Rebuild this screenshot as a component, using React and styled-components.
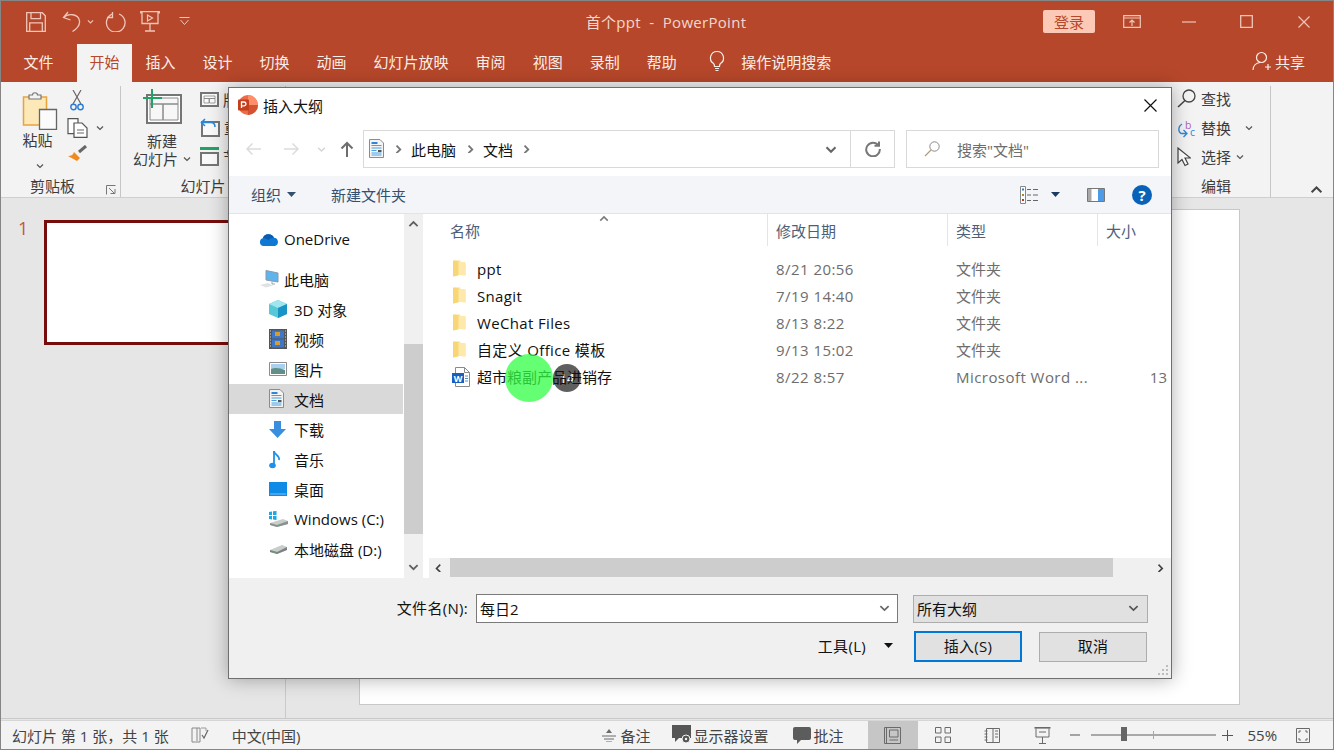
import React from "react";
import styled, { createGlobalStyle } from "styled-components";

const FONT = `"Open Sans", "Noto Sans CJK SC", sans-serif`;
const RED = "#b7472a";
const QA = "#efc6b9";

const Global = createGlobalStyle`
  html, body { margin: 0; padding: 0; background: #fff; overflow: hidden; }
  * { box-sizing: border-box; }
  body { font-family: ${FONT}; font-size: 15px; }
  svg { display: block; flex-shrink: 0; }
`;

const Win = styled.div`
  position: relative; width: 1334px; height: 750px; display: flex; flex-direction: column;
  border: 1px solid #858585; background: #e6e6e6; overflow: hidden;
`;

/* ---------- Title bar ---------- */
const TitleBar = styled.div`
  height: 41px; flex: none; background: ${RED}; color: #f3d8cf;
  display: grid; grid-template-columns: 1fr auto 1fr; align-items: center;
`;
const Quick = styled.div`display: flex; align-items: center; padding-left: 25px;`;
const QuickBtn = styled.span`display: flex; margin-left: ${p => p.$ml || 0}px;`;
const DocTitle = styled.div`font-size: 15px; white-space: pre; color: #f3d8cf; letter-spacing: .3px; margin-right: 2px;`;
const WinCtrls = styled.div`display: flex; align-items: center; justify-content: flex-end; padding-right: 23px;`;
const Login = styled.div`
  width: 52px; height: 23px; background: #fbc9b5; color: ${RED}; border-radius: 2px;
  display: flex; align-items: center; justify-content: center; margin-right: 28px;
`;
const CtrlBtn = styled.span`display: flex; margin-left: ${p => p.$ml || 0}px;`;

/* ---------- Tabs ---------- */
const Tabs = styled.div`
  height: 40px; flex: none; background: ${RED}; display: flex; align-items: flex-end; padding-left: 9px;
`;
const Tab = styled.div`
  height: 38px; display: flex; align-items: center; white-space: nowrap; padding-bottom: 4px;
  padding-left: ${p => (p.$active ? 12.5 : 13.5)}px; padding-right: ${p => (p.$active ? 12.5 : 13.5)}px;
  margin-left: ${p => (p.$active ? 10 : 0)}px;
  background: ${p => (p.$active ? "#f3f3f3" : "transparent")};
  color: ${p => (p.$active ? RED : "#fbeee9")};
`;
const TellMe = styled.div`display: flex; align-items: center; height: 38px; padding-bottom: 4px; margin-left: 18px; color: #fbeee9; gap: 15px;`;
const Share = styled.div`display: flex; align-items: center; height: 38px; padding-bottom: 4px; margin-left: auto; padding-right: 28px; color: #fbeee9; gap: 3px;`;

/* ---------- Ribbon ---------- */
const Ribbon = styled.div`
  height: 116px; flex: none; background: #f3f3f3; border-bottom: 1px solid #cfcfcf;
  display: flex; color: #3c3c3c; position: relative;
`;
const Group = styled.div`
  width: ${p => p.$w}px; height: 111px; margin-top: 4px; display: flex; flex-direction: column; position: relative;
  border-right: 1px solid #c6c6c6; margin-left: ${p => p.$ml || 0}px;
`;
const GroupBody = styled.div`flex: 1; min-height: 0; display: flex; padding-left: ${p => p.$pl || 0}px;`;
const GroupLabel = styled.div`
  height: 24px; flex: none; display: flex; align-items: center; justify-content: ${p => (p.$left ? "flex-start" : "center")};
  padding-left: ${p => p.$pl || 0}px; padding-right: ${p => p.$pr || 0}px; position: relative; white-space: nowrap;
`;
const Launcher = styled.span`position: absolute; right: 4px; bottom: 2px;`;
const BigCol = styled.div`display: flex; flex-direction: column; align-items: center; line-height: 18px; padding-top: ${p => p.$pt || 0}px;`;
const BigLabel = styled.div`display: flex; align-items: center; gap: ${p => p.$gap || 3}px; white-space: nowrap; margin-top: ${p => p.$mt || 0}px; margin-right: ${p => p.$mr || 0}px;`;
const SmallCol = styled.div`display: flex; flex-direction: column; margin-left: ${p => p.$ml}px; padding-top: ${p => p.$pt}px; gap: ${p => p.$gap}px;`;
const SmallRow = styled.div`display: flex; align-items: center; height: ${p => p.$h}px; gap: ${p => p.$gap ?? 6}px; white-space: nowrap; padding-left: ${p => p.$pl || 0}px;`;
const Collapse = styled.span`position: absolute; right: 10px; bottom: 2px;`;
const IconBox = styled.span`width: 24px; display: flex; flex: none;`;

/* ---------- Workspace ---------- */
const Work = styled.div`flex: 1; display: flex; min-height: 0; border-bottom: 1px solid #c9c9c9; background: #e6e6e6;`;
const Thumbs = styled.div`width: 285px; flex: none; border-right: 1px solid #c9c9c9; display: flex; padding: 22px 0 0 17px; overflow: hidden;`;
const ThumbNum = styled.div`width: 26px; flex: none; color: #c9553a; font-size: 18px; line-height: 16px;`;
const Thumb = styled.div`width: 267px; height: 125px; background: #fff; border: 3px solid #760c0c; flex: none;`;
const Canvas = styled.div`flex: 1; padding: 11px 0 0 73px;`;
const Slide = styled.div`width: 881px; height: 496px; background: #fff; border: 1px solid #c8c8c8;`;

/* ---------- Status bar ---------- */
const Status = styled.div`
  height: 29px; flex: none; margin-top: 1px; background: #f3f3f3; display: flex; align-items: center; color: #444;
  border-top: 1px solid #d6d6d6; font-size: 15px; white-space: nowrap;
`;
const StatusText = styled.span`margin-left: ${p => p.$ml || 0}px;`;
const StatusIcon = styled.span`display: flex; margin-left: ${p => p.$ml || 0}px;`;
const Views = styled.div`display: flex; margin-left: 24px; align-self: stretch;`;
const ViewBtn = styled.div`width: 50px; display: flex; align-items: center; justify-content: center; background: ${p => (p.$on ? "#c6c6c6" : "transparent")};`;
const Zoom = styled.div`width: 125px; height: 2px; background: #a8a8a8; position: relative; margin-left: 11px;`;
const ZoomThumb = styled.span`position: absolute; left: 30px; top: -7px; width: 6px; height: 14px; background: #666;`;
const ZoomTick = styled.span`position: absolute; left: 62px; top: -3px; width: 1px; height: 8px; background: #a8a8a8;`;

/* ---------- Dialog ---------- */
const Dialog = styled.div`
  position: absolute; left: 227px; top: 86px; width: 944px; height: 592px; background: #fff;
  border: 1px solid #6f6f6f; box-shadow: 0 0 18px rgba(0,0,0,.32); display: flex; flex-direction: column; color: #111;
`;
const DlgTitle = styled.div`height: 42px; flex: none; display: flex; align-items: center; padding: 0 14px 8px 9px; gap: 5px;`;
const DlgClose = styled.span`margin-left: auto; display: flex;`;
const AddrRow = styled.div`height: 38px; flex: none; display: flex; align-items: stretch; padding-left: 16px;`;
const NavBtn = styled.span`display: flex; align-items: center; justify-content: center; width: ${p => p.$w}px; margin-left: ${p => p.$ml || 0}px;`;
const AddrBox = styled.div`
  width: 488px; margin-left: 9px; border: 1px solid #d9d9d9; display: flex; align-items: center; padding-left: 5px;
`;
const Crumb = styled.span`margin-left: ${p => p.$ml || 0}px; display: flex;`;
const AddrDrop = styled.span`margin-left: auto; margin-right: 13px; display: flex;`;
const RefreshBox = styled.div`width: 44px; border: 1px solid #d9d9d9; border-left: 0; display: flex; align-items: center; justify-content: center;`;
const SearchBox = styled.div`
  width: 253px; margin-left: 11px; border: 1px solid #d9d9d9; display: flex; align-items: center; padding-left: 17px; gap: 17px; color: #6d6d6d;
`;
const Toolbar = styled.div`
  height: 38px; flex: none; margin-top: 8px; background: #f3f5f8; border-bottom: 1px solid #e4e4e4;
  display: flex; align-items: center; padding-left: 22px; color: #33506f;
`;
const ToolBtn = styled.div`display: flex; align-items: center; gap: 6px; margin-left: ${p => p.$ml || 0}px; white-space: nowrap;`;
const ToolIcons = styled.div`margin-left: auto; padding-right: 19px; display: flex; align-items: center;`;
const ToolIcon = styled.span`display: flex; margin-left: ${p => p.$ml || 0}px;`;
const Content = styled.div`flex: 1; display: flex; min-height: 0; position: relative;`;
const Nav = styled.div`width: 175px; flex: none; padding-top: 10px;`;
const NavRow = styled.div`
  height: 30px; display: flex; align-items: center; padding-left: ${p => p.$indent}px;
  margin-bottom: ${p => p.$gap || 0}px; background: ${p => (p.$on ? "#d9d9d9" : "transparent")}; margin-right: 1px; white-space: nowrap;
`;
const NavIcon = styled.span`width: 25px; flex: none; display: flex;`;
const VScroll = styled.div`width: 19px; flex: none; background: #f0f0f0; display: flex; flex-direction: column; align-items: center; justify-content: space-between; padding: 6px 0 7px; position: relative;`;
const VThumb = styled.span`position: absolute; left: 0; right: 0; top: 130px; height: 190px; background: #cdcdcd;`;
const ListPane = styled.div`flex: 1; min-width: 0; display: flex; flex-direction: column; margin-left: 1px; position: relative;`;
const HeaderRow = styled.div`
  display: grid; grid-template-columns: 344px 180px 150px 1fr; height: 33px; flex: none; color: #4c607a; position: relative;
`;
const HeadCell = styled.div`
  padding-left: ${p => p.$pl || 8}px; height: 32px; display: flex; align-items: center; white-space: nowrap; overflow: hidden;
  border-right: ${p => (p.$noline ? 0 : 1)}px solid #e5e5e5;
`;
const SortMark = styled.span`position: absolute; left: 175px; top: 1px;`;
const Rows = styled.div`flex: 1; padding-top: 8px;`;
const FileRow = styled.div`display: grid; grid-template-columns: 344px 180px 150px 1fr; height: 27px; align-items: center; white-space: nowrap;`;
const NameCell = styled.div`display: flex; align-items: center; padding-left: 28px; position: relative; z-index: 2; letter-spacing: ${p => (p.$latin ? ".35px" : "0")};`;
const FileIcon = styled.span`width: 25px; flex: none; display: flex;`;
const MetaCell = styled.div`padding-left: 8px; color: #6d6d6d; overflow: hidden; letter-spacing: ${p => (p.$latin ? ".45px" : "0")};`;
const SizeCell = styled.div`text-align: right; padding-right: 4px; color: #6d6d6d;`;
const HScroll = styled.div`height: 20px; flex: none; margin-left: 5px; background: #f0f0f0; display: flex; align-items: center; justify-content: space-between; padding: 0 5px; position: relative;`;
const HThumb = styled.span`position: absolute; left: 21px; width: 663px; top: 0; bottom: 1px; background: #cdcdcd;`;
const Footer = styled.div`height: 100px; flex: none; background: #f0f0f0; padding: 16px 23px 0 0; position: relative;`;
const FootRow = styled.div`display: flex; align-items: center; justify-content: flex-end; margin-bottom: 8px; margin-right: ${p => p.$mr || 0}px;`;
const FieldLabel = styled.span`margin-right: 8px; padding-bottom: 2px; white-space: nowrap; letter-spacing: .3px;`;
const NameInput = styled.div`width: 422px; height: 29px; background: #fff; border: 1px solid #7a7a7a; display: flex; align-items: center; padding: 0 7px 1px 3px; justify-content: space-between;`;
const TypeSelect = styled.div`width: 235px; height: 28px; margin-left: 15px; background: #e1e1e1; border: 1px solid #adadad; display: flex; align-items: center; padding: 0 8px 1px 3px; justify-content: space-between;`;
const Tools = styled.div`display: flex; align-items: center; margin-right: 21px; padding-bottom: 2px; gap: 18px; white-space: nowrap; letter-spacing: .3px;`;
const Btn = styled.div`
  width: 108px; height: ${p => (p.$primary ? 31 : 30)}px; background: #e1e1e1; margin-left: ${p => p.$ml || 0}px;
  border: ${p => (p.$primary ? "2px solid #0078d7" : "1px solid #adadad")}; padding-bottom: 2px; letter-spacing: .3px;
  display: flex; align-items: center; justify-content: center;
`;
const Grip = styled.span`position: absolute; right: 2px; bottom: 2px;`;
const ClickMark = styled.div`
  position: absolute; left: ${p => p.$x}px; top: ${p => p.$y}px; width: ${p => p.$d}px; height: ${p => p.$d}px; border-radius: 50%;
  background: ${p => p.$c}; z-index: ${p => p.$z}; color: #fff; font-size: 13px; display: flex; align-items: center; justify-content: center;
`;

/* ---------- Icons ---------- */
const S = ({ w, h, children, vb }) => <svg width={w} height={h} viewBox={vb || `0 0 ${w} ${h}`} fill="none">{children}</svg>;
const Chev = ({ c = "#555", w = 8, dir = "down", sw = 1.2 }) => {
  const d = { down: "M1 1.5 L4 4.5 L7 1.5", up: "M1 4.5 L4 1.5 L7 4.5", left: "M5 .5 L2 3.5 L5 6.5", right: "M2 .5 L5 3.5 L2 6.5" }[dir];
  return <S w={w} h={w * 0.75} vb="0 0 8 6"><path d={d} stroke={c} strokeWidth={sw} /></S>;
};
const Caret = ({ c = "#333" }) => <S w={9} h={5}><path d="M0 0h9L4.5 5z" fill={c} /></S>;

const SaveI = () => <S w={20} h={20}><path d="M.7.7h15.6l3 3v15.6H.7z M5 .7v6h9.5v-6 M3.7 19.3v-8.5h12.6v8.5" stroke={QA} strokeWidth="1.3" /></S>;
const UndoI = () => <S w={19} h={21}><path d="M6 1 1.5 6.5 8.5 9 M1.5 6.5C6 2 16.5 2.5 17.5 10c.6 4.5-3 8-7 10.5" stroke={QA} strokeWidth="1.3" /></S>;
const RedoI = () => <S w={21} h={21}><path d="M7 3.2A9.3 9.3 0 1 0 14 3 M7.5 1v5.5H2" stroke={QA} strokeWidth="1.3" /></S>;
const PresentI = () => <S w={20} h={21}><path d="M.7 2.5V.7h18.6v1.8 M2 1v11.5h16V1 M10 12.5V20 M5 20h10" stroke={QA} strokeWidth="1.3" /><path d="M7.500 4v6l5-3z" stroke={QA} strokeWidth="1.2" /></S>;
const QaDrop = () => <S w={11} h={9}><path d="M.5.5h10 M1.500 3l4 4.500 4-4.500" stroke={QA} strokeWidth="1" /></S>;
const RibDisplay = () => <S w={18} h={13}><path d="M.7.7h16.6v11.6H.7z M.7 3h16.6" stroke={QA} strokeWidth="1.2" /><path d="M9 11V5 M6.500 7.500 9 5l2.500 2.500" stroke={QA} strokeWidth="1.2" /></S>;
const MinI = () => <S w={14} h={2}><path d="M0 1h14" stroke={QA} strokeWidth="1.2" /></S>;
const MaxI = () => <S w={13} h={13}><path d="M.7.7h11.6v11.6H.7z" stroke={QA} strokeWidth="1.3" /></S>;
const CloseI = ({ c = QA, s = 12 }) => <S w={s} h={s}><path d={`M.5.5 ${s - .5} ${s - .5}M${s - .5} .5 .5 ${s - .5}`} stroke={c} strokeWidth="1.2" /></S>;
const BulbI = () => <S w={18} h={22}><path d="M9 1.500a6.500 6.500 0 0 0-3.500 12c.8.6 1 1.500 1 3h5c0-1.500.2-2.400 1-3A6.500 6.500 0 0 0 9 1.500z M7 18.500h4 M7.500 20.500h3" stroke="#fbeee9" strokeWidth="1.2" /></S>;
const UserI = () => <S w={20} h={20}><circle cx="9.500" cy="6.500" r="5" stroke="#fbeee9" strokeWidth="1.2" /><path d="M1 19c0-4 3-7 7-7.500 M13 16h6 M16 13v6" stroke="#fbeee9" strokeWidth="1.2" /></S>;

const PasteI = () => <S w={36} h={38}><path d="M1.500 5h23v28h-23z" fill="#fde8b8" stroke="#e8a33d" strokeWidth="1.5" /><path d="M7 3h3.500c0-3 5-3 5 0H19v4H7z" fill="#f3f3f3" stroke="#777" strokeWidth="1.2" /><path d="M17.500 17.500h17v20h-17z" fill="#fbfbfb" stroke="#666" strokeWidth="1.3" /></S>;
const CutI = () => <S w={14} h={21}><path d="M3 0l8 14M11 0 3 14" stroke="#666" strokeWidth="1.2" /><circle cx="3.500" cy="17" r="2.700" stroke="#2b7cd3" strokeWidth="1.4" /><circle cx="10.500" cy="17" r="2.700" stroke="#2b7cd3" strokeWidth="1.4" /></S>;
const CopyI = () => <S w={21} h={20}><path d="M1 .7h10v15H1z" fill="#fff" stroke="#555" strokeWidth="1.2" /><path d="M7 5h8l5 5v9.300H7z" fill="#fff" stroke="#555" strokeWidth="1.2" /><path d="M10 12h7M10 15h7" stroke="#666" /></S>;
const BrushI = () => <S w={20} h={19}><path d="M12 7l7-6" stroke="#666" strokeWidth="3" /><path d="M7 7l6 6-3 3-9-5c3 0 5-1 6-4z" fill="#f08a1d" /></S>;
const LauncherI = () => <S w={10} h={10}><path d="M.5 9.500V.5h9 M3 3l5 5 M4.500 8.500H9V4" stroke="#777" /></S>;
const NewSlideI = () => <S w={39} h={35}><path d="M4 6h34v28H4z" fill="#fff" stroke="#757575" strokeWidth="2" /><path d="M7 9h28v6H7z M7 15h13v16H7z M20 15h15v16H20z" fill="#f7f7f7" stroke="#8a8a8a" /><path d="M9 0v19 M0 9h19" stroke="#21a366" strokeWidth="2" /></S>;
const LayoutI = () => <S w={19} h={15}><path d="M1 1h17v13H1z" fill="#fafafa" stroke="#757575" strokeWidth="2" /><path d="M4 4h11v2.500H4z M4 6.500h5V11H4z M9.500 6.500H15V11H9.500z" stroke="#888" strokeWidth=".8" /></S>;
const ResetI = () => <S w={20} h={20}><path d="M2 5h17v14H2z" fill="#fafafa" stroke="#757575" strokeWidth="2" /><path d="M5 2 1.500 5.500 5 9 M2 5.500h9c3 0 4 2 4 4.500" stroke="#2b88d8" strokeWidth="1.6" /></S>;
const SectionI = () => <S w={19} h={19}><path d="M0 1.500h19" stroke="#21a366" strokeWidth="3" /><path d="M1 6h17v12H1z" fill="#fafafa" stroke="#757575" strokeWidth="2" /></S>;
const FindI = () => <S w={19} h={19}><circle cx="12" cy="7" r="6" stroke="#444" strokeWidth="1.3" /><path d="M8 11.500 1 18" stroke="#444" strokeWidth="1.6" /></S>;
const ReplaceI = () => <S w={22} h={22}><path d="M5 7C1.500 9 .5 14 4 16.500h5 M6.500 13 10 16.500 6.500 20" stroke="#2b88d8" strokeWidth="1.3" /><text x="8" y="11.500" fontSize="10.500" fontFamily="Open Sans" fill="#b061c0">b</text><text x="13" y="19" fontSize="10.500" fontFamily="Open Sans" fill="#2b88d8">c</text></S>;
const SelectI = () => <S w={14} h={20}><path d="M1 1v15l4-3.500 3 6 3-1.500-3-6h5.500z" fill="#fff" stroke="#444" strokeWidth="1.2" /></S>;

const PptLogo = () => <S w={20} h={20}><circle cx="10" cy="10" r="10" fill="#ed6c47" /><path d="M10 0a10 10 0 0 1 10 10H10z" fill="#ff8f6b" /><path d="M10 20a10 10 0 0 0 10-10H10z" fill="#d35230" /><rect x="0" y="4.500" width="11" height="11" rx="1" fill="#c43e1c" /><path d="M3.500 13V7h2.500a1.800 1.800 0 0 1 0 3.800H3.500" stroke="#fff" strokeWidth="1.3" /></S>;
const NavArrow = ({ c, left }) => <S w={16} h={14}><path d={left ? "M16 7H2 M7.500 1.500 2 7l5.500 5.500" : "M0 7h14 M8.500 1.500 14 7l-5.500 5.500"} stroke={c} strokeWidth="1.5" /></S>;
const UpArrow = () => <S w={14} h={16}><path d="M7 16V2 M1.500 7.500 7 2l5.500 5.500" stroke="#6e6e6e" strokeWidth="2" /></S>;
const DocsI = ({ s = 15 }) => <S w={s} h={s * 1.27} vb="0 0 15 19"><path d="M.5.5h10.500l3.500 3.500v14.500H.5z" fill="#f4f4f4" stroke="#8b8b8b" /><path d="M2.500 3h6v2h-6z" fill="#2f86d8" /><path d="M2.500 6.500h10M2.500 9h10 M2.500 11.500h5M2.500 14h10M2.500 16h10" stroke="#4a9fe0" /><path d="M9 11h3.500v2H9z" fill="#555" /></S>;
const Refresh = () => <S w={16} h={16}><path d="M13.500 4.500A6.800 6.800 0 1 0 14.800 8 M9.500 4.800h4.500V.5" stroke="#777" strokeWidth="2" /></S>;
const SearchI = () => <S w={16} h={16}><circle cx="10.500" cy="5.500" r="4.700" stroke="#8a8a8a" /><path d="M7 9 1 15" stroke="#b39b78" strokeWidth="1.3" /></S>;
const ListViewI = () => <S w={18} h={18}><path d="M.5.500h5v17h-5z" fill="#fff" stroke="#888" /><path d="M2 2.500h2v2H2z" fill="#3577c8" /><path d="M2 8h2v2H2z" fill="#a08a30" /><path d="M2 13h2v2H2z" fill="#b83b1d" /><path d="M7 3.500h4M13 3.500h5M7 9h4M13 9h5M7 14.500h4M13 14.500h5" stroke="#666" /></S>;
const PaneI = () => <S w={18} h={14}><path d="M.5.500h17v13H.5z" fill="#fff" stroke="#777" /><path d="M1 1h3.500v12H1z" fill="#a8a8a8" /><path d="M11 1h6v12h-6z" fill="#4d9be6" /></S>;
const HelpI = () => <S w={20} h={20}><circle cx="10" cy="10" r="10" fill="#0a62b8" /><text x="10" y="15.500" textAnchor="middle" fontSize="15" fontWeight="700" fontFamily="Open Sans" fill="#fff">?</text></S>;

const OneDriveI = () => <S w={20} h={13}><path d="M4.500 13A4 4 0 0 1 3.800 5.200 6 6 0 0 1 15 4.800 4.200 4.200 0 0 1 16 13z" fill="#0f78d4" /><path d="M3.800 5.200A6 6 0 0 1 15 4.800C12 4.500 11 6 9.500 7 7.500 5.500 5.500 5 3.800 5.200z" fill="#0b5cad" /></S>;
const PcI = () => <S w={20} h={18}><path d="M7 .5l12 2.500v9L7 10z" fill="#5fb4ee" stroke="#8a9aa8" /><path d="M13 11.500v2.500h3" stroke="#9aa5ae" /><path d="M1 15l8-2 5 2.500-7 2z" fill="#dfe3e6" /></S>;
const CubeI = () => <S w={18} h={18}><path d="M9 0l9 4v10l-9 4-9-4V4z" fill="#56c8d8" /><path d="M0 4l9 4 9-4-9-4z" fill="#9fe6ee" /><path d="M9 8l9-4v10l-9 4z" fill="#1a93c6" /></S>;
const VideoI = () => <S w={18} h={20}><path d="M0 0h18v20H0z" fill="#555" /><path d="M3 1.500h12v8H3z" fill="#3d78c8" /><path d="M3 10.500h12v8H3z" fill="#3d78c8" /><path d="M6 3h5v4H6zM6 12h5v4H6z" fill="#d99a2e" /><path d="M1 2h1M1 5h1M1 8h1M1 11h1M1 14h1M1 17h1M16 2h1M16 5h1M16 8h1M16 11h1M16 14h1M16 17h1" stroke="#ddd" /></S>;
const PicI = () => <S w={18} h={14}><path d="M.5.500h17v13H.5z" fill="#fff" stroke="#8c8c8c" /><path d="M2 2h14v5H2z" fill="#a9d0ee" /><path d="M2 7c4-2 9-1 14 1v4H2z" fill="#5f8f86" /></S>;
const DownI = () => <S w={17} h={17}><path d="M5 0h7v8h5l-8.500 9L0 8h5z" fill="#3a8ede" /></S>;
const MusicI = () => <S w={12} h={19}><path d="M5 1v14" stroke="#1e90ea" strokeWidth="1.8" /><ellipse cx="3.500" cy="15.500" rx="3.300" ry="2.800" fill="#1e90ea" /><path d="M5 1c0 4 6 4 5 9" stroke="#1e90ea" strokeWidth="1.8" /></S>;
const DesktopI = () => <S w={18} h={14}><path d="M0 0h18v14H0z" fill="#0d8be6" /><path d="M1 12h16" stroke="#7ac2f5" /></S>;
const WinDriveI = () => <S w={19} h={16}><path d="M0 1l3-.5V4H0zM4 .3 7.500 0v4H4zM0 5h3v3.500L0 8zM4 5h3.500v4L4 8.600z" fill="#19a9e8" /><path d="M1 12l13-4 5 2v3L8 16l-7-2z" fill="#c9cccd" /><path d="M1 12l7 2 11-4v3L8 16l-7-2z" fill="#8b8f90" /><path d="M9 14h1" stroke="#3ecf5c" /></S>;
const DriveI = () => <S w={19} h={10}><path d="M1 6l12-5 5 2v3L8 10 1 8z" fill="#c9cccd" /><path d="M1 6l7 2 10-5v3L8 10 1 8z" fill="#7d8182" /><path d="M5 8h2" stroke="#3ecf5c" /></S>;
const FolderI = () => <S w={14} h={17}><path d="M2 .5h6l1 3h4.500v12L7 15l-5.500 1.500z" fill="#fce08d" /><path d="M1 .5 6 1v14.500L1 16.500z" fill="#f8d676" /><path d="M7 2h6.500v13H7z" fill="#fde9ac" /></S>;
const WordI = () => <S w={18} h={20}><path d="M3.500.5h9l5 5v14h-14z" fill="#fff" stroke="#8a8a8a" /><path d="M12.500.5v5h5" stroke="#8a8a8a" /><path d="M0 6h12v10H0z" fill="#1b5ebe" /><text x="6" y="14.500" textAnchor="middle" fontSize="9" fontWeight="700" fontFamily="Open Sans" fill="#fff">W</text><path d="M13 9h3M13 11.500h3M13 14h3" stroke="#5a8fd6" /></S>;
const GripI = () => <S w={12} h={12}><path d="M9 1h2v2H9zM5 5h2v2H5zM9 5h2v2H9zM1 9h2v2H1zM5 9h2v2H5zM9 9h2v2H9z" fill="#bdbdbd" /></S>;

const G = "#6b6b6b";
const SigI = () => <S w={20} h={16}><path d="M1 1h5l3 0v14H1z M6 1v13" stroke="#888" /><path d="M11 8l2 3 4-8" stroke="#666" strokeWidth="1.2" /><path d="M10 1h5v3" stroke="#999" /></S>;
const NotesI = () => <S w={14} h={13}><path d="M4 4l3-4 3 4z" fill={G} /><path d="M0 7h14M2 10h10M4 13h6" stroke={G} /></S>;
const MonitorI = () => <S w={22} h={20}><path d="M0 0h19v13H7l-4 4v-4H0z" fill="#555" /><circle cx="14" cy="14" r="4" fill="#555" stroke="#f3f3f3" strokeWidth="1" /><circle cx="14" cy="14" r="1.2" fill="#f3f3f3" /></S>;
const CommentI = () => <S w={18} h={17}><path d="M2 0h14a2 2 0 0 1 2 2v9a2 2 0 0 1-2 2H8l-4 4v-4H2a2 2 0 0 1-2-2V2a2 2 0 0 1 2-2z" fill="#5c5c5c" /></S>;
const NormalV = () => <S w={17} h={17}><path d="M.5.500h16v16H.5z M2.500.5v16 M5.500 3h8.500v7H5.500z M5.500 13h8.500" stroke="#6a6a6a" /></S>;
const GridV = () => <S w={16} h={16}><path d="M.5.500h5.500v5.500H.5zM10 .5h5.500v5.500H10zM.5 10h5.500v5.500H.5zM10 10h5.500v5.500H10z" stroke="#6a6a6a" /></S>;
const ReadV = () => <S w={18} h={15}><path d="M2.500.5h13v14h-13z M9 .5v14 M.5 3h3M.5 6h3M.5 9h3M.5 12h3 M11 3h3M11 6h3M11 9h3" stroke="#6a6a6a" /></S>;
const ShowV = () => <S w={17} h={17}><path d="M.5.8h16" stroke="#6a6a6a" strokeWidth="1.6" /><path d="M2 1.500v8.500h13V1.500 M8.500 10v6.500 M5 16.500h7 M5 5h7" stroke="#6a6a6a" /></S>;
const FitI = () => <S w={14} h={15}><path d="M.5.500h13v14H.5z" stroke="#6a6a6a" /><path d="M3 5V3h2 M11 5V3H9 M3 10v2h2 M11 10v2H9" stroke="#6a6a6a" /></S>;

const navItems = [
  { i: <CubeI />, t: "3D 对象" }, { i: <VideoI />, t: "视频" }, { i: <PicI />, t: "图片" },
  { i: <DocsI />, t: "文档", on: true }, { i: <DownI />, t: "下载" }, { i: <MusicI />, t: "音乐" },
  { i: <DesktopI />, t: "桌面" }, { i: <WinDriveI />, t: "Windows (C:)" }, { i: <DriveI />, t: "本地磁盘 (D:)" },
];
const files = [
  ["ppt", "8/21 20:56", "文件夹"], ["Snagit", "7/19 14:40", "文件夹"], ["WeChat Files", "8/13 8:22", "文件夹"],
  ["自定义 Office 模板", "9/13 15:02", "文件夹"], ["超市粮副产品进销存", "8/22 8:57", "Microsoft Word ...", "13"],
];
const tabs = ["审阅", "视图", "录制", "帮助"];

export default function App() {
  return (
    <Win>
      <Global />
      <TitleBar>
        <Quick>
          <QuickBtn><SaveI /></QuickBtn>
          <QuickBtn $ml={16}><UndoI /></QuickBtn>
          <QuickBtn $ml={6}><Chev c={QA} w={7} /></QuickBtn>
          <QuickBtn $ml={11}><RedoI /></QuickBtn>
          <QuickBtn $ml={14}><PresentI /></QuickBtn>
          <QuickBtn $ml={19}><QaDrop /></QuickBtn>
        </Quick>
        <DocTitle>首个ppt  -  PowerPoint</DocTitle>
        <WinCtrls>
          <Login>登录</Login>
          <CtrlBtn><RibDisplay /></CtrlBtn>
          <CtrlBtn $ml={41}><MinI /></CtrlBtn>
          <CtrlBtn $ml={44}><MaxI /></CtrlBtn>
          <CtrlBtn $ml={45}><CloseI /></CtrlBtn>
        </WinCtrls>
      </TitleBar>
      <Tabs>
        <Tab>文件</Tab>
        <Tab $active>开始</Tab>
        {["插入", "设计", "切换", "动画", "幻灯片放映", ...tabs].map(t => <Tab key={t}>{t}</Tab>)}
        <TellMe><BulbI />操作说明搜索</TellMe>
        <Share><UserI />共享</Share>
      </Tabs>
      <Ribbon>
        <Group $w={120}>
          <GroupBody $pl={21}>
            <BigCol $pt={6}>
              <PasteI />
              <BigLabel $mt={1} $mr={5}>粘贴</BigLabel>
              <BigLabel $mt={14}><Chev /></BigLabel>
            </BigCol>
            <SmallCol $ml={9} $pt={4} $gap={7}>
              <SmallRow $h={21} $pl={3}><CutI /></SmallRow>
              <SmallRow $h={20} $gap={8}><CopyI /><Chev /></SmallRow>
              <SmallRow $h={19}><BrushI /></SmallRow>
            </SmallCol>
          </GroupBody>
          <GroupLabel $pr={16}>剪贴板<Launcher><LauncherI /></Launcher></GroupLabel>
        </Group>
        <Group $w={165}>
          <GroupBody $pl={12}>
            <BigCol $pt={3}>
              <NewSlideI />
              <BigLabel $mt={8}>新建</BigLabel>
              <BigLabel $gap={5}>幻灯片<Chev /></BigLabel>
            </BigCol>
            <SmallCol $ml={9} $pt={5} $gap={10}>
              <SmallRow $h={16} $gap={4}><LayoutI />版式</SmallRow>
              <SmallRow $h={20} $gap={4}><ResetI />重置</SmallRow>
              <SmallRow $h={19} $gap={4}><SectionI />节</SmallRow>
            </SmallCol>
          </GroupBody>
          <GroupLabel>幻灯片</GroupLabel>
        </Group>
        <Group $w={94} $ml={891}>
          <GroupBody>
            <SmallCol $ml={0} $pt={0} $gap={4}>
              <SmallRow $h={25} $gap={0}><IconBox><FindI /></IconBox>查找</SmallRow>
              <SmallRow $h={25} $gap={0}><IconBox><ReplaceI /></IconBox>替换<Crumb $ml={14}><Chev /></Crumb></SmallRow>
              <SmallRow $h={25} $gap={0}><IconBox><SelectI /></IconBox>选择<Crumb $ml={5}><Chev /></Crumb></SmallRow>
            </SmallCol>
          </GroupBody>
          <GroupLabel $left $pl={24}>编辑</GroupLabel>
        </Group>
        <Collapse><Chev w={13} dir="up" c="#444" /></Collapse>
      </Ribbon>
      <Work>
        <Thumbs>
          <ThumbNum>1</ThumbNum>
          <Thumb />
        </Thumbs>
        <Canvas><Slide /></Canvas>
      </Work>
      <Status>
        <StatusText $ml={11}>幻灯片 第 1 张，共 1 张</StatusText>
        <StatusIcon $ml={22}><SigI /></StatusIcon>
        <StatusText $ml={21}>中文(中国)</StatusText>
        <StatusIcon $ml={301}><NotesI /></StatusIcon>
        <StatusText $ml={5}>备注</StatusText>
        <StatusIcon $ml={21}><MonitorI /></StatusIcon>
        <StatusText $ml={0}>显示器设置</StatusText>
        <StatusIcon $ml={24}><CommentI /></StatusIcon>
        <StatusText $ml={3}>批注</StatusText>
        <Views>
          <ViewBtn $on><NormalV /></ViewBtn>
          <ViewBtn><GridV /></ViewBtn>
          <ViewBtn><ReadV /></ViewBtn>
          <ViewBtn><ShowV /></ViewBtn>
        </Views>
        <StatusIcon $ml={2}><S w={10} h={2}><path d="M0 1h10" stroke="#555" /></S></StatusIcon>
        <Zoom><ZoomThumb /><ZoomTick /></Zoom>
        <StatusIcon $ml={6}><S w={11} h={11}><path d="M0 5.500h11M5.500 0v11" stroke="#555" /></S></StatusIcon>
        <StatusText $ml={15}>55%</StatusText>
        <StatusIcon $ml={19}><FitI /></StatusIcon>
      </Status>

      <Dialog>
        <DlgTitle>
          <PptLogo />
          <span>插入大纲</span>
          <DlgClose><CloseI c="#111" s={13} /></DlgClose>
        </DlgTitle>
        <AddrRow>
          <NavBtn $w={16}><NavArrow c="#dcdcdc" left /></NavBtn>
          <NavBtn $w={16} $ml={23}><NavArrow c="#dcdcdc" /></NavBtn>
          <NavBtn $w={10} $ml={16}><Chev c="#d5d5d5" w={9} /></NavBtn>
          <NavBtn $w={14} $ml={14}><UpArrow /></NavBtn>
          <AddrBox>
            <DocsI />
            <Crumb $ml={10}><Chev dir="right" c="#777" w={10} sw={1.5} /></Crumb>
            <Crumb $ml={7}>此电脑</Crumb>
            <Crumb $ml={10}><Chev dir="right" c="#777" w={10} sw={1.5} /></Crumb>
            <Crumb $ml={7}>文档</Crumb>
            <Crumb $ml={9}><Chev dir="right" c="#777" w={10} sw={1.5} /></Crumb>
            <AddrDrop><Chev c="#666" w={12} sw={1.4} /></AddrDrop>
          </AddrBox>
          <RefreshBox><Refresh /></RefreshBox>
          <SearchBox><SearchI />搜索"文档"</SearchBox>
        </AddrRow>
        <Toolbar>
          <ToolBtn>组织<Caret c="#33506f" /></ToolBtn>
          <ToolBtn $ml={35}>新建文件夹</ToolBtn>
          <ToolIcons>
            <ToolIcon><ListViewI /></ToolIcon>
            <ToolIcon $ml={13}><Caret c="#1f3a60" /></ToolIcon>
            <ToolIcon $ml={27}><PaneI /></ToolIcon>
            <ToolIcon $ml={27}><HelpI /></ToolIcon>
          </ToolIcons>
        </Toolbar>
        <Content>
          <Nav>
            <NavRow $indent={30} $gap={10}><NavIcon><OneDriveI /></NavIcon>OneDrive</NavRow>
            <NavRow $indent={30}><NavIcon><PcI /></NavIcon>此电脑</NavRow>
            {navItems.map(n => (
              <NavRow key={n.t} $indent={40} $on={n.on}><NavIcon>{n.i}</NavIcon>{n.t}</NavRow>
            ))}
          </Nav>
          <VScroll>
            <VThumb />
            <Chev dir="up" c="#606060" w={11} sw={1.3} />
            <Chev c="#606060" w={11} sw={1.3} />
          </VScroll>
          <ListPane>
            <HeaderRow>
              <HeadCell $pl={26}>名称</HeadCell>
              <HeadCell>修改日期</HeadCell>
              <HeadCell>类型</HeadCell>
              <HeadCell $noline>大小</HeadCell>
              <SortMark><Chev dir="up" c="#7a7a7a" w={10} /></SortMark>
            </HeaderRow>
            <Rows>
              {files.map(f => (
                <FileRow key={f[0]}>
                  <NameCell $latin={!f[3]}><FileIcon>{f[3] ? <WordI /> : <FolderI />}</FileIcon>{f[0]}</NameCell>
                  <MetaCell $latin>{f[1]}</MetaCell>
                  <MetaCell $latin={!!f[3]}>{f[2]}</MetaCell>
                  <SizeCell>{f[3] || ""}</SizeCell>
                </FileRow>
              ))}
            </Rows>
            <HScroll>
              <HThumb />
              <Chev dir="left" c="#444" w={10} sw={1.3} />
              <Chev dir="right" c="#444" w={10} sw={1.3} />
            </HScroll>
          </ListPane>
        </Content>
        <Footer>
          <FootRow>
            <FieldLabel>文件名(N):</FieldLabel>
            <NameInput>每日2<Chev c="#666" w={11} /></NameInput>
            <TypeSelect>所有大纲<Chev c="#555" w={11} /></TypeSelect>
          </FootRow>
          <FootRow $mr={1}>
            <Tools>工具(L)<Caret c="#111" /></Tools>
            <Btn $primary>插入(S)</Btn>
            <Btn $ml={17}>取消</Btn>
          </FootRow>
          <Grip><GripI /></Grip>
        </Footer>
        <ClickMark $x={324} $y={276} $d={28} $c="#5f5f5f" $z={1}>14</ClickMark>
        <ClickMark $x={276} $y={266} $d={48} $c="rgba(50,255,70,.75)" $z={3} />
      </Dialog>
    </Win>
  );
}
